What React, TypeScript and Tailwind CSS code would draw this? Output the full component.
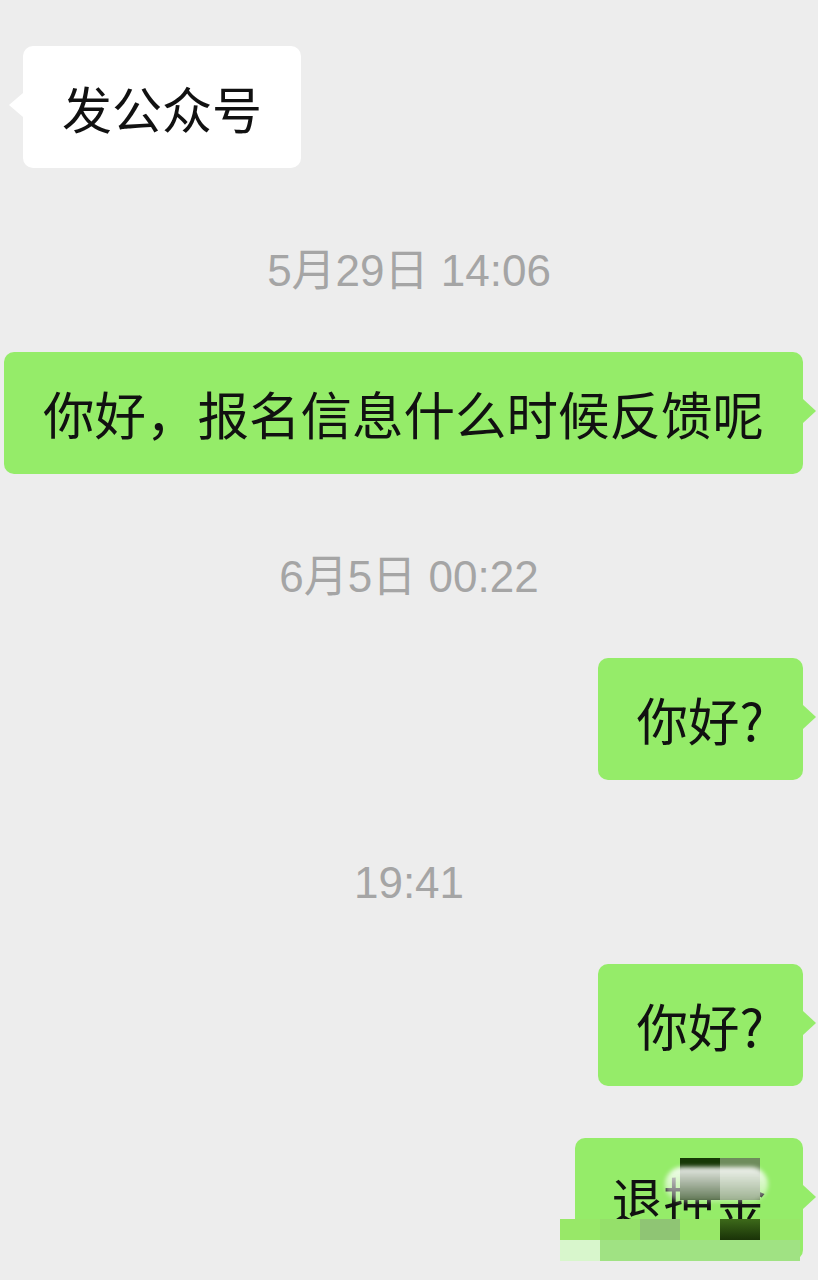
import React from "react";

const cjk = "font-['Noto_Sans_CJK_SC',sans-serif]";

function Time({ children }: { children: React.ReactNode }) {
  return (
    <div
      className="flex justify-center pt-[83px] pb-[61px] text-[44px] leading-[40px] text-[#a5a5a5] font-['Liberation_Sans','Noto_Sans_CJK_SC',sans-serif]"
    >
      {children}
    </div>
  );
}

function Right({
  children,
  extra,
  padX = "px-[39px]",
}: {
  children: React.ReactNode;
  extra?: React.ReactNode;
  padX?: string;
}) {
  return (
    <div className="flex justify-end pr-[15px]">
      <div
        className={`relative rounded-[10px] bg-[#95ec69] ${padX} py-[31px] text-[51.5px] leading-[60px] text-[#111111] whitespace-nowrap ${cjk}`}
      >
        {children}
        <div className="absolute left-full top-[47px] h-0 w-0 border-y-[12px] border-y-transparent border-l-[13px] border-l-[#95ec69]" />
        {extra}
      </div>
    </div>
  );
}

export default function App() {
  return (
    <div className="min-h-[1280px] w-[818px] overflow-hidden bg-[#ededed] pt-[46px]">
      <div className="flex pl-[23px]">
        <div
          className={`relative rounded-[10px] bg-white px-[39px] py-[31px] text-[50px] leading-[60px] text-[#111111] ${cjk}`}
        >
          发公众号
          <div className="absolute right-full top-[47px] h-0 w-0 border-y-[12px] border-y-transparent border-r-[14px] border-r-white" />
        </div>
      </div>

      <Time>5月29日 14:06</Time>
      <Right>你好，报名信息什么时候反馈呢</Right>

      <Time>6月5日 00:22</Time>
      <Right>你好?</Right>

      <Time>19:41</Time>
      <Right>你好?</Right>

      <div className="h-[52px]" />
      <Right
        padX="pl-[36px] pr-[37px]"
        extra={
          <>
            <div className="absolute right-[83px] top-[20px] h-[42px] w-[40px] bg-[#173806]" />
            <div className="absolute right-[43px] top-[20px] h-[42px] w-[40px] bg-[#6e8c5c]" />
            <div className="absolute right-[35px] top-[29px] h-[35px] w-[103px] rounded-full bg-gradient-to-b from-white/90 to-white/30 blur-[2px]" />
            <div className="absolute right-[3px] top-[81px] flex h-[21px]">
              <div className="w-[40px] bg-[#98e868]" />
              <div className="w-[40px] bg-[#95e06a]" />
              <div className="w-[40px] bg-[#8fc574]" />
              <div className="w-[40px] bg-[#98e868]" />
              <div className="w-[40px] bg-gradient-to-b from-[#3d6a1a] to-[#1a3308]" />
              <div className="w-[40px] bg-[#98e868]" />
            </div>
            <div className="absolute right-[3px] top-[102px] flex h-[21px]">
              <div className="w-[40px] bg-[#d8f6cc]" />
              <div className="w-[200px] bg-[#a0e283]" />
            </div>
          </>
        }
      >
        退押金
      </Right>
    </div>
  );
}
